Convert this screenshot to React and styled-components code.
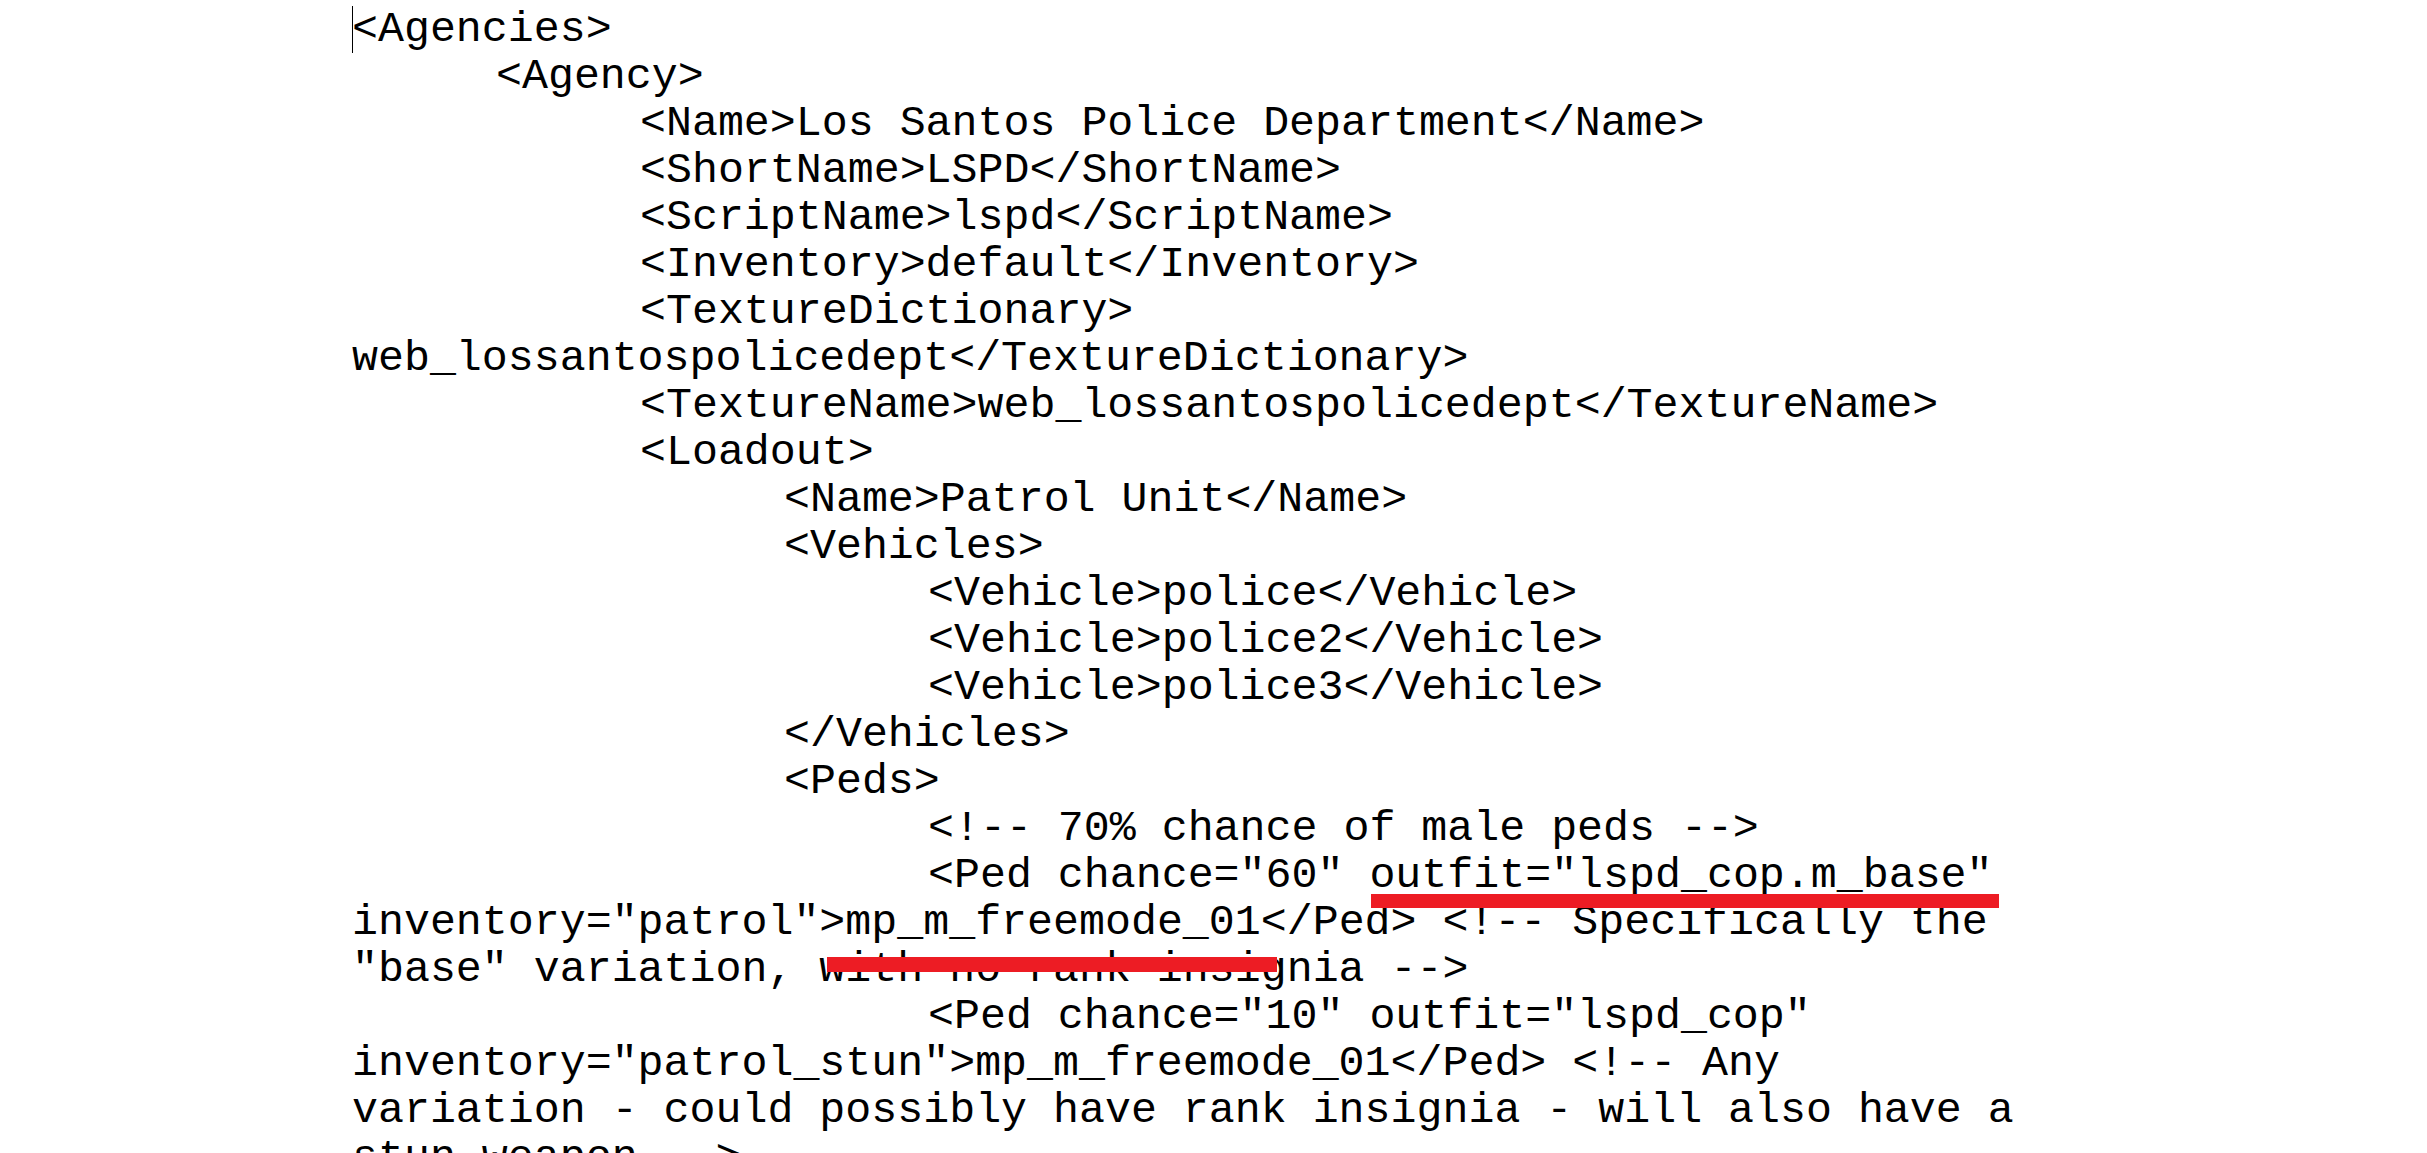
import styled, { createGlobalStyle } from "styled-components";

const GlobalStyle = createGlobalStyle`
  html, body {
    margin: 0;
    background: #fff;
  }
`;

// one row of the document, indented by tab level
const lines = [
  { level: 0, text: "<Agencies>", caret: true },
  { level: 1, text: "<Agency>" },
  { level: 2, text: "<Name>Los Santos Police Department</Name>" },
  { level: 2, text: "<ShortName>LSPD</ShortName>" },
  { level: 2, text: "<ScriptName>lspd</ScriptName>" },
  { level: 2, text: "<Inventory>default</Inventory>" },
  { level: 2, text: "<TextureDictionary>" },
  { level: 0, text: "web_lossantospolicedept</TextureDictionary>" },
  { level: 2, text: "<TextureName>web_lossantospolicedept</TextureName>" },
  { level: 2, text: "<Loadout>" },
  { level: 3, text: "<Name>Patrol Unit</Name>" },
  { level: 3, text: "<Vehicles>" },
  { level: 4, text: "<Vehicle>police</Vehicle>" },
  { level: 4, text: "<Vehicle>police2</Vehicle>" },
  { level: 4, text: "<Vehicle>police3</Vehicle>" },
  { level: 3, text: "</Vehicles>" },
  { level: 3, text: "<Peds>" },
  { level: 4, text: "<!-- 70% chance of male peds -->" },
  {
    level: 4,
    before: '<Ped chance="60" ',
    mark: 'outfit="lspd_cop.m_base"',
    bar: { left: 2, right: -6, top: 43, height: 14 },
    after: "",
  },
  {
    level: 0,
    before: 'inventory="patrol">',
    mark: "mp_m_freemode_01",
    bar: { left: -18, right: -16, top: 59, height: 15 },
    after: "</Ped> <!-- Specifically the",
  },
  { level: 0, text: '"base" variation, with no rank insignia -->' },
  { level: 4, text: '<Ped chance="10" outfit="lspd_cop"' },
  { level: 0, text: 'inventory="patrol_stun">mp_m_freemode_01</Ped> <!-- Any' },
  { level: 0, text: "variation - could possibly have rank insignia - will also have a" },
  { level: 0, text: "stun weapon -->" },
];

const App = () => {
  return (
    <>
      <GlobalStyle />
      <Page>
        {lines.map((line, i) => (
          <Line key={i} $level={line.level}>
            {line.caret && <Caret />}
            {line.mark ? (
              <>
                {line.before}
                <Marked
                  $left={line.bar.left}
                  $right={line.bar.right}
                  $top={line.bar.top}
                  $height={line.bar.height}
                >
                  {line.mark}
                </Marked>
                {line.after}
              </>
            ) : (
              line.text
            )}
          </Line>
        ))}
      </Page>
    </>
  );
};

const Page = styled.div`
  height: 100vh;
  overflow: hidden;
  box-sizing: border-box;
  padding: 6px 0 0 352px;
  font-family: "Courier New", "Nimbus Mono PS", "Nimbus Mono L", "FreeMono",
    "Liberation Mono", monospace;
  font-size: 43.28px;
  line-height: 47px;
  color: #000;
  white-space: pre;
`;

const Line = styled.div`
  padding-left: ${(p) => p.$level * 144}px;
  height: 47px;
`;

const Caret = styled.span`
  display: inline-block;
  width: 1px;
  height: 47px;
  margin-right: -1px;
  vertical-align: top;
  background: #000;
`;

const Marked = styled.span`
  position: relative;

  &::after {
    content: "";
    position: absolute;
    left: ${(p) => p.$left}px;
    right: ${(p) => p.$right}px;
    top: ${(p) => p.$top}px;
    height: ${(p) => p.$height}px;
    background: #ed1c24;
  }
`;

export default App;
